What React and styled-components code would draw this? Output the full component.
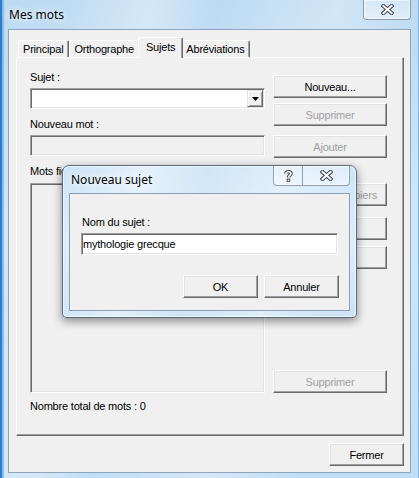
import React from "react";
import styled, { createGlobalStyle } from "styled-components";

// global page reset

const GlobalStyle = createGlobalStyle`
  html, body {
    margin: 0;
    padding: 0;
    background: #c6e0f5;
  }
  body {
    font-family: "Liberation Sans", Arial, sans-serif;
    font-size: 11px;
    letter-spacing: -0.2px;
    color: #000;
  }
`;

// window frame (aero glass)

const Window = styled.div`
  position: relative;
  width: 419px;
  height: 478px;
  box-sizing: border-box;
  display: flex;
  flex-direction: column;
  padding-bottom: 5px;
  background:
    linear-gradient(105deg, rgba(255, 255, 255, 0) 10%, rgba(255, 255, 255, 0.35) 28%, rgba(255, 255, 255, 0) 40%, rgba(255, 255, 255, 0.3) 62%, rgba(255, 255, 255, 0) 78%),
    linear-gradient(180deg, #bcdaf2 0%, #cfe6f8 45%, #c1def4 100%);
  box-shadow: inset 2px 0 #2d7ccc, inset 4px 0 #86bdea, inset -1px 0 #7fb2dc;
`;

const TitleBar = styled.div`
  height: ${(p) => p.$h}px;
  flex-shrink: 0;
  display: flex;
  align-items: flex-start;
  justify-content: space-between;
  padding-left: ${(p) => p.$pl}px;
`;

const Title = styled.span`
  font-family: "Noto Sans", "Open Sans", sans-serif;
  font-size: 12px;
  letter-spacing: 0;
  line-height: ${(p) => p.$lh}px;
  color: #000;
  text-shadow: 0 0 6px rgba(255, 255, 255, 0.95), 0 0 10px rgba(255, 255, 255, 0.8);
`;

const CaptionGroup = styled.div`
  display: flex;
  height: 19px;
  margin-right: ${(p) => p.$mr}px;
  border: 1px solid rgba(70, 90, 120, 0.55);
  border-top: none;
  border-radius: 0 0 4px 4px;
  overflow: hidden;
  background: linear-gradient(180deg, rgba(255, 255, 255, 0.25), rgba(255, 255, 255, 0.5));
  box-shadow: inset 0 0 0 1px rgba(255, 255, 255, 0.55);
`;

const CaptionButton = styled.div`
  width: ${(p) => p.$w}px;
  display: flex;
  align-items: center;
  justify-content: center;
  & + & {
    border-left: 1px solid rgba(70, 90, 120, 0.55);
  }
`;

const Client = styled.div`
  flex: 1;
  margin: 0 8px;
  box-sizing: border-box;
  border: 1px solid #8ca4bd;
  background: #f0f0f0;
  padding: 7px 0 0 7px;
`;

// tabs

const TabStrip = styled.div`
  display: flex;
  align-items: flex-end;
  height: 20px;
  padding-left: 2px;
`;

const Tab = styled.div`
  position: relative;
  box-sizing: border-box;
  height: ${(p) => (p.$active ? 21 : 17)}px;
  margin: ${(p) => (p.$active ? "0 -2px -1px" : "0")};
  z-index: ${(p) => (p.$active ? 1 : 0)};
  padding: ${(p) => (p.$active ? "0 7px 2px" : "0 5px 0 4px")};
  display: flex;
  align-items: center;
  background: #f0f0f0;
  border-top: 1px solid #fff;
  border-left: 1px solid #fff;
  border-right: 1px solid #696969;
  border-radius: 2px 2px 0 0;
  box-shadow: inset -1px 0 #a0a0a0;
  white-space: nowrap;
`;

const Panel = styled.div`
  width: 388px;
  height: 379px;
  box-sizing: border-box;
  border: 1px solid;
  border-color: #fff #696969 #696969 #fff;
  box-shadow: inset -1px -1px #a0a0a0;
  padding: 13px 0 0 13px;
`;

const PanelGrid = styled.div`
  display: grid;
  grid-template-columns: 235px 114px;
  column-gap: 8px;
`;

const Column = styled.div`
  display: flex;
  flex-direction: column;
  align-items: flex-start;
`;

const Label = styled.div`
  height: 13px;
  line-height: 13px;
  margin-top: ${(p) => p.$mt || 0}px;
  margin-left: ${(p) => p.$ml || 0}px;
  white-space: nowrap;
`;

// classic controls

const Button = styled.button`
  box-sizing: border-box;
  width: ${(p) => p.$w}px;
  height: 23px;
  margin-top: ${(p) => (p.$mt === "auto" ? "auto" : `${p.$mt || 0}px`)};
  padding: 0;
  border: 1px solid;
  border-color: #fff #696969 #696969 #fff;
  box-shadow: inset -1px -1px #a0a0a0, inset 1px 1px #e3e3e3;
  background: #f0f0f0;
  font-family: inherit;
  font-size: 11px;
  letter-spacing: -0.2px;
  color: ${(p) => (p.$disabled ? "#a0a0a0" : "#000")};
  white-space: nowrap;
  overflow: hidden;
`;

const Field = styled.div`
  box-sizing: border-box;
  width: ${(p) => p.$w}px;
  height: ${(p) => p.$h}px;
  margin-top: ${(p) => p.$mt || 0}px;
  border: 1px solid;
  border-color: #a0a0a0 #fff #fff #a0a0a0;
  box-shadow: inset 1px 1px #696969, inset -1px -1px #e3e3e3;
  background: ${(p) => p.$bg};
`;

const Combo = styled(Field)`
  display: flex;
  justify-content: flex-end;
  padding: 1px;
`;

const DropButton = styled.div`
  box-sizing: border-box;
  width: 16px;
  height: 100%;
  display: flex;
  align-items: center;
  justify-content: center;
  background: #f0f0f0;
  border: 1px solid;
  border-color: #e3e3e3 #696969 #696969 #e3e3e3;
  box-shadow: inset 1px 1px #fff, inset -1px -1px #a0a0a0;
`;

const TextInput = styled(Field)`
  padding-left: 1px;
  line-height: 20px;
  white-space: nowrap;
`;

const Footer = styled.div`
  display: flex;
  justify-content: flex-end;
  width: 388px;
  margin-top: 7px;
`;

// modal dialog

const Modal = styled.div`
  position: absolute;
  left: 62px;
  top: 165px;
  width: 295px;
  height: 153px;
  box-sizing: border-box;
  display: flex;
  flex-direction: column;
  border: 1px solid #5a6b7e;
  border-radius: 7px 7px 4px 4px;
  background:
    linear-gradient(100deg, rgba(255, 255, 255, 0) 5%, rgba(255, 255, 255, 0.45) 25%, rgba(255, 255, 255, 0) 45%, rgba(255, 255, 255, 0.35) 70%, rgba(255, 255, 255, 0) 90%),
    linear-gradient(180deg, #cfe5f7 0%, #dceefb 50%, #cde4f6 100%);
  box-shadow: 0 3px 10px rgba(0, 0, 0, 0.45), inset 0 0 0 1px rgba(255, 255, 255, 0.6);
`;

const ModalClient = styled.div`
  flex: 1;
  margin: 0 6px 6px;
  border: 1px solid #8a9db2;
  background: #f0f0f0;
  padding: 22px 10px 0 11px;
  display: flex;
  flex-direction: column;
`;

const ButtonRow = styled.div`
  display: flex;
  justify-content: flex-end;
  gap: 6px;
  margin-top: 20px;
`;

// drawn glyphs

const CloseGlyph = () => (
  <svg width="13" height="11" viewBox="0 0 13 11">
    <path d="M2.5 2 L10.5 9 M10.5 2 L2.5 9" stroke="#3a4656" strokeWidth="4" strokeLinecap="square" />
    <path d="M2.5 2 L10.5 9 M10.5 2 L2.5 9" stroke="#fff" strokeWidth="2" strokeLinecap="square" />
  </svg>
);

const HelpGlyph = () => (
  <svg width="9" height="12" viewBox="0 0 9 12">
    <path d="M2 3.6 C2 1.2 7 1.2 7 3.6 C7 5.4 4.5 5.2 4.5 7.4" fill="none" stroke="#3a4656" strokeWidth="3.6" />
    <rect x="2.7" y="8.6" width="3.6" height="3.2" fill="#3a4656" />
    <path d="M2 3.6 C2 1.2 7 1.2 7 3.6 C7 5.4 4.5 5.2 4.5 7.4" fill="none" stroke="#fff" strokeWidth="1.6" />
    <rect x="3.7" y="9.6" width="1.6" height="1.4" fill="#fff" />
  </svg>
);

const ArrowGlyph = () => (
  <svg width="7" height="4" viewBox="0 0 7 4">
    <path d="M0 0 H7 L3.5 4 Z" fill="#000" />
  </svg>
);

const tabs = ["Principal", "Orthographe", "Sujets", "Abréviations"];

const App = () => {
  return (
    <>
      <GlobalStyle />
      <Window>
        <TitleBar $h={29} $pl={9}>
          <Title $lh={30}>Mes mots</Title>
          <CaptionGroup $mr={8}>
            <CaptionButton $w={46}>
              <CloseGlyph />
            </CaptionButton>
          </CaptionGroup>
        </TitleBar>

        <Client>
          <TabStrip>
            {tabs.map((t) => (
              <Tab key={t} $active={t === "Sujets"}>
                {t}
              </Tab>
            ))}
          </TabStrip>

          <Panel>
            <PanelGrid>
              <Column>
                <Label>Sujet :</Label>
                <Combo $w={235} $h={21} $mt={4} $bg="#fff">
                  <DropButton>
                    <ArrowGlyph />
                  </DropButton>
                </Combo>
                <Label $mt={9}>Nouveau mot :</Label>
                <Field $w={235} $h={21} $mt={4} $bg="#f0f0f0" />
                <Label $mt={9}>Mots figurant dans ce sujet :</Label>
                <Field $w={235} $h={210} $mt={5} $bg="#f0f0f0" />
              </Column>
              <Column>
                <Button $w={114} $mt={4}>Nouveau...</Button>
                <Button $w={114} $mt={5} $disabled>Supprimer</Button>
                <Button $w={114} $mt={9} $disabled>Ajouter</Button>
                <Button $w={114} $mt={25} $disabled>Vers presse-papiers</Button>
                <Button $w={114} $mt={11}>Importer</Button>
                <Button $w={114} $mt={6}>Exporter</Button>
                <Button $w={114} $mt="auto" $disabled>Supprimer</Button>
              </Column>
            </PanelGrid>
            <Label $mt={7}>Nombre total de mots : 0</Label>
          </Panel>

          <Footer>
            <Button $w={75}>Fermer</Button>
          </Footer>
        </Client>

        <Modal>
          <TitleBar $h={27} $pl={8}>
            <Title $lh={27}>Nouveau sujet</Title>
            <CaptionGroup $mr={6}>
              <CaptionButton $w={28}>
                <HelpGlyph />
              </CaptionButton>
              <CaptionButton $w={46}>
                <CloseGlyph />
              </CaptionButton>
            </CaptionGroup>
          </TitleBar>
          <ModalClient>
            <Label $ml={1}>Nom du sujet :</Label>
            <TextInput $w={257} $h={22} $mt={4} $bg="#fff">
              mythologie grecque
            </TextInput>
            <ButtonRow>
              <Button $w={75}>OK</Button>
              <Button $w={75}>Annuler</Button>
            </ButtonRow>
          </ModalClient>
        </Modal>
      </Window>
    </>
  );
};

export default App;
